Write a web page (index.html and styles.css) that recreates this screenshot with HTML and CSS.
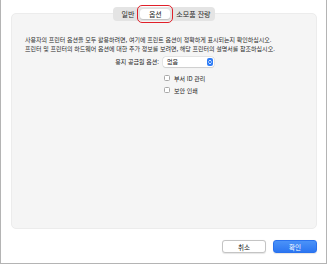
FILE: index.html
```html
<!DOCTYPE html>
<html lang="ko">
<head>
  <meta charset="UTF-8">
  <title>옵션</title>
  <link rel="stylesheet" href="styles.css">
</head>
<body>

  <div class="window">
    <div class="tabs">
      <span class="tab">일반</span>
      <span class="tab active">옵션</span>
      <span class="tab">소모품 잔량</span>
    </div>

    <div class="panel">
      <p class="intro">
        사용자의 프린터 옵션을 모두 활용하려면, 여기에 프린트 옵션이 정확하게 표시되는지 확인하십시오.<br>
        프린터 및 프린터의 하드웨어 옵션에 대한 추가 정보를 보려면, 해당 프린터의 설명서를 참조하십시오.
      </p>

      <div class="row">
        <span class="label">용지 공급원 옵션:</span>
        <div class="select">
          <span>없음</span>
          <span class="stepper">
            <svg width="4" height="6" viewBox="0 0 4 6">
              <path d="M0.7 2.3 L2 1 L3.3 2.3 M0.7 3.7 L2 5 L3.3 3.7" fill="none" stroke="#fff" stroke-width="0.8" stroke-linecap="round" stroke-linejoin="round"/>
            </svg>
          </span>
        </div>
      </div>

      <div class="row check-row first">
        <span class="label"></span>
        <div class="check"><span class="box"></span>부서 ID 관리</div>
      </div>
      <div class="row check-row">
        <span class="label"></span>
        <div class="check"><span class="box"></span>보안 인쇄</div>
      </div>
    </div>

    <div class="footer">
      <button class="btn">취소</button>
      <button class="btn primary">확인</button>
    </div>
  </div>

</body>
</html>
```

FILE: styles.css
```css
body {
  margin: 0;
  padding: 0;
  background: white;
  font-family: "Noto Sans CJK KR", "Noto Sans", sans-serif;
  color: #222;
}

.window {
  width: 306px;
  height: 263px;
  border: 1px solid #b4b4b4;
  border-top: none;
  display: flex;
  flex-direction: column;
  padding: 0 9px 0 10px;
  background: white;
}

.tabs {
  position: relative;
  z-index: 1;
  align-self: center;
  display: flex;
  align-items: center;
  gap: 3px;
  margin-top: 7px;
  height: 14px;
  padding: 0 2px 0 6px;
  background: #e4e4e4;
  border-radius: 4px;
}

.tab {
  font-size: 7px;
  line-height: 10px;
  padding: 0 2px;
  color: #2a2a2a;
}

.tab.active {
  position: relative;
  background: white;
  width: 30px;
  padding: 0;
  margin: 0 1px;
  text-align: center;
  border-radius: 3px;
  box-shadow: 0 0.5px 1px rgba(0, 0, 0, 0.15);
}

.tab.active::after {
  content: "";
  position: absolute;
  left: -3px;
  right: -3px;
  top: -4px;
  bottom: -4px;
  border: 1.5px solid #e0202a;
  border-radius: 5px;
}

.panel {
  flex: 1;
  margin-top: -8px;
  background: #f5f5f5;
  border: 1px solid #ececec;
  border-radius: 5px;
  padding: 21px 13px 0;
}

.intro {
  margin: 0;
  font-size: 6px;
  line-height: 9px;
  color: #2a2a2a;
}

.row {
  display: flex;
  align-items: center;
  gap: 4px;
  margin-top: 4px;
  font-size: 6px;
}

.label {
  flex: none;
  width: 134px;
  text-align: right;
  line-height: 10px;
}

.select {
  width: 51px;
  height: 10px;
  box-sizing: border-box;
  background: white;
  border-radius: 2.5px;
  box-shadow: 0 0 0 0.5px rgba(0, 0, 0, 0.12), 0 0.5px 1px rgba(0, 0, 0, 0.1);
  display: flex;
  align-items: center;
  justify-content: space-between;
  padding: 0 1px 0 4px;
  line-height: 10px;
}

.stepper {
  width: 6px;
  height: 8px;
  background: #2f7df6;
  border-radius: 2px;
  display: flex;
  align-items: center;
  justify-content: center;
}

.check-row {
  margin-top: 2px;
}

.check-row.first {
  margin-top: 6px;
}

.check {
  display: flex;
  align-items: center;
  gap: 4px;
  height: 10px;
  padding-left: 1px;
}

.box {
  width: 6px;
  height: 6px;
  box-sizing: border-box;
  border: 0.5px solid #a8a8a8;
  background: white;
  border-radius: 1.5px;
}

.footer {
  display: flex;
  justify-content: flex-end;
  gap: 7px;
  padding: 11px 0 10px;
}

.btn {
  width: 44px;
  height: 13px;
  padding: 0;
  font-family: inherit;
  font-size: 6.5px;
  line-height: 12px;
  color: #222;
  background: white;
  border: 0.5px solid #c4c4c4;
  border-radius: 3px;
  box-shadow: 0 0.5px 1px rgba(0, 0, 0, 0.1);
}

.btn.primary {
  color: white;
  border-color: #2a72ee;
  background: linear-gradient(#4b92f8, #2c76f1);
}
```
